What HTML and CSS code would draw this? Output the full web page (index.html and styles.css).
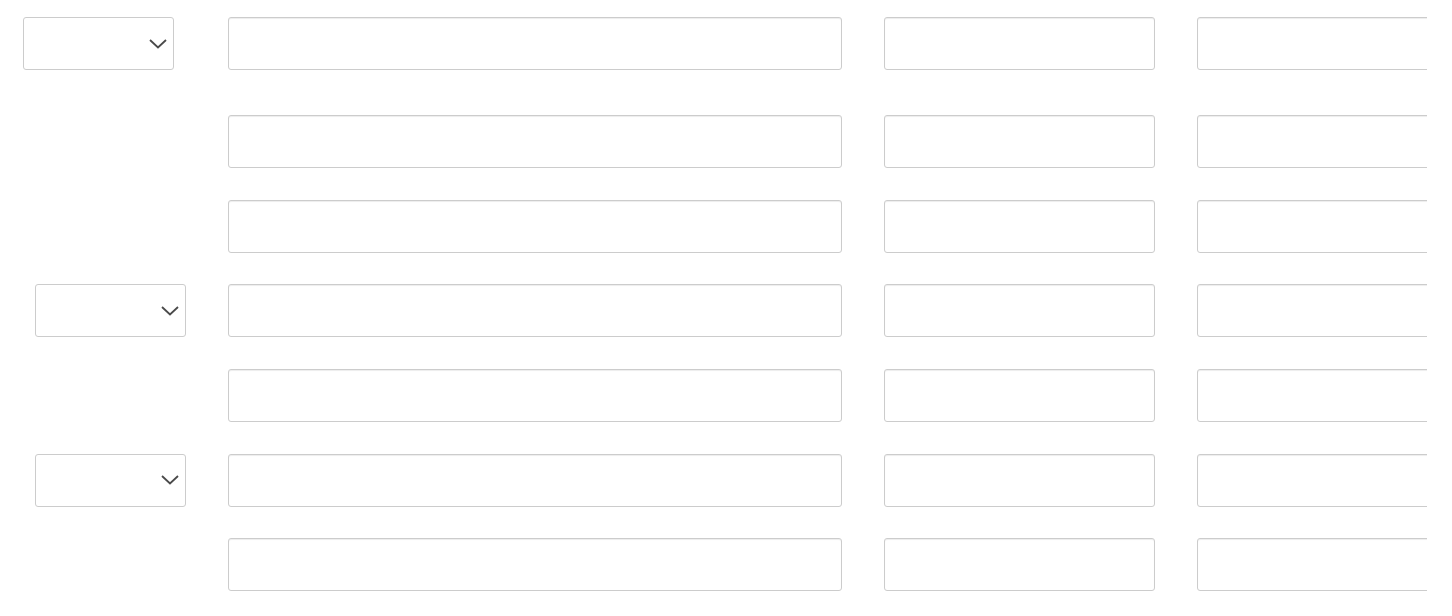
FILE: index.html
```html
<!DOCTYPE html>
<html>
<head>
<meta charset="utf-8">
<link rel="stylesheet" href="styles.css">
</head>
<body>
<div class="sheet">
  <div class="row row-first">
    <div class="lead lead-a"><div class="select"><svg class="chev" width="18" height="10" viewBox="0 0 18 10"><path d="M1 1 L9 8.5 L17 1" fill="none" stroke="#4a4a4a" stroke-width="1.8"/></svg></div></div>
    <div class="field wide"></div><div class="field mid"></div><div class="field mid"></div>
  </div>
  <div class="row">
    <div class="lead"></div>
    <div class="field wide"></div><div class="field mid"></div><div class="field mid"></div>
  </div>
  <div class="row">
    <div class="lead"></div>
    <div class="field wide"></div><div class="field mid"></div><div class="field mid"></div>
  </div>
  <div class="row">
    <div class="lead lead-b"><div class="select"><svg class="chev" width="18" height="10" viewBox="0 0 18 10"><path d="M1 1 L9 8.5 L17 1" fill="none" stroke="#4a4a4a" stroke-width="1.8"/></svg></div></div>
    <div class="field wide"></div><div class="field mid"></div><div class="field mid"></div>
  </div>
  <div class="row">
    <div class="lead"></div>
    <div class="field wide"></div><div class="field mid"></div><div class="field mid"></div>
  </div>
  <div class="row">
    <div class="lead lead-b"><div class="select"><svg class="chev" width="18" height="10" viewBox="0 0 18 10"><path d="M1 1 L9 8.5 L17 1" fill="none" stroke="#4a4a4a" stroke-width="1.8"/></svg></div></div>
    <div class="field wide"></div><div class="field mid"></div><div class="field mid"></div>
  </div>
  <div class="row">
    <div class="lead"></div>
    <div class="field wide"></div><div class="field mid"></div><div class="field mid"></div>
  </div>
</div>
</body>
</html>
```
FILE: styles.css
```css
html, body {
  margin: 0;
  padding: 0;
  background: #fff;
  font-family: "Liberation Sans", Arial, sans-serif;
}
.sheet {
  width: 1427px;
  overflow: hidden;
  padding-top: 17px;
}
.row {
  display: flex;
  align-items: flex-start;
  gap: 42px;
  height: 53px;
  margin-bottom: 31.7px;
}
.row-first {
  margin-bottom: 45px;
}
.lead {
  width: 186px;
  flex: none;
  box-sizing: border-box;
}
.lead-a { padding-left: 23px; }
.lead-b { padding-left: 35px; }
.select {
  width: 151px;
  height: 53px;
  box-sizing: border-box;
  border: 1px solid #ccc;
  border-radius: 3px;
  background: #fff;
  display: flex;
  align-items: center;
  justify-content: flex-end;
  padding-right: 6px;
}
.chev { display: block; }
.field {
  flex: none;
  height: 53px;
  box-sizing: border-box;
  border: 1px solid #ccc;
  border-radius: 3px;
  background: #fff;
  box-shadow: inset 0 1px 1px rgba(0,0,0,0.075);
}
.wide { width: 614px; }
.mid { width: 271px; }
```
